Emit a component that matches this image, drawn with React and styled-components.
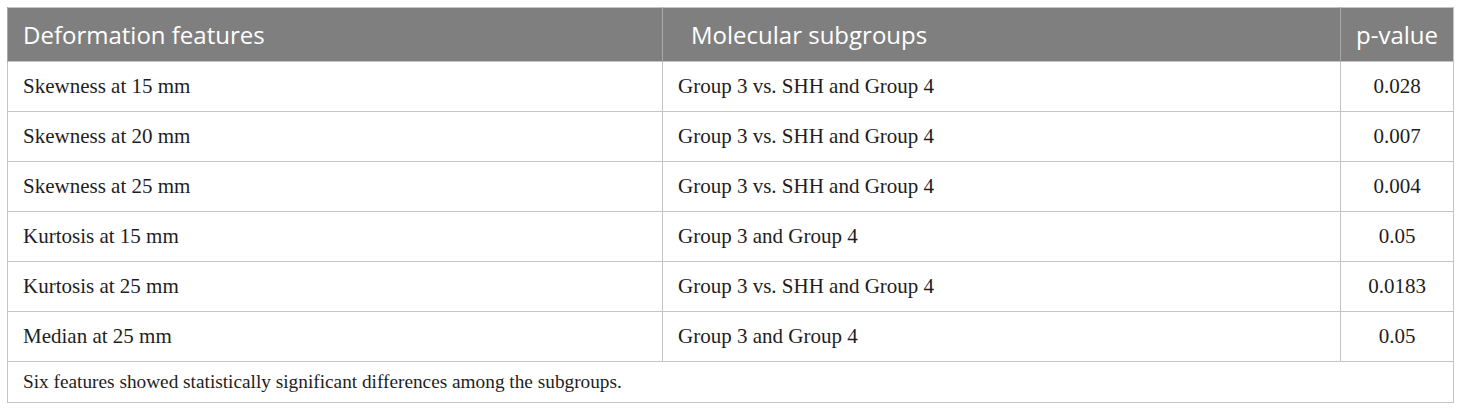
import React from 'react';
import styled, { createGlobalStyle } from 'styled-components';

const GlobalStyle = createGlobalStyle`
  html, body {
    margin: 0;
    padding: 0;
    background: #ffffff;
  }
`;

const Page = styled.div`
  width: 1460px;
  height: 410px;
  padding: 7px 8px 0 7px;
  box-sizing: border-box;
`;

const Table = styled.table`
  width: 1446px;
  border-collapse: collapse;
  table-layout: fixed;
  border: 1px solid #c4c4c4;
`;

const HeadCell = styled.th`
  background: #7f7f7f;
  color: #ffffff;
  font-family: 'Open Sans', sans-serif;
  font-weight: 400;
  font-size: 24px;
  height: 53px;
  padding: 0 15px 0 ${props => props.indent || 15}px;
  text-align: ${props => (props.center ? 'center' : 'left')};
  border-left: 1px solid #a8a8a8;
  vertical-align: middle;
  white-space: nowrap;
`;

const Cell = styled.td`
  font-family: 'Liberation Serif', serif;
  font-size: 21px;
  color: #1e1e1e;
  height: 49px;
  padding: 0 15px;
  text-align: ${props => (props.center ? 'center' : 'left')};
  border: 1px solid #c4c4c4;
  vertical-align: middle;
`;

const NoteCell = styled.td`
  font-family: 'Liberation Serif', serif;
  font-size: 19.3px;
  color: #1e1e1e;
  height: 40px;
  padding: 0 15px;
  border: 1px solid #c4c4c4;
  vertical-align: middle;
`;

const rows = [
  ['Skewness at 15 mm', 'Group 3 vs. SHH and Group 4', '0.028'],
  ['Skewness at 20 mm', 'Group 3 vs. SHH and Group 4', '0.007'],
  ['Skewness at 25 mm', 'Group 3 vs. SHH and Group 4', '0.004'],
  ['Kurtosis at 15 mm', 'Group 3 and Group 4', '0.05'],
  ['Kurtosis at 25 mm', 'Group 3 vs. SHH and Group 4', '0.0183'],
  ['Median at 25 mm', 'Group 3 and Group 4', '0.05'],
];

const App = () => {
  return (
    <>
      <GlobalStyle />
      <Page>
        <Table>
          <colgroup>
            <col style={{ width: 655 }} />
            <col style={{ width: 678 }} />
            <col style={{ width: 113 }} />
          </colgroup>
          <thead>
            <tr>
              <HeadCell>Deformation features</HeadCell>
              <HeadCell indent={28}>Molecular subgroups</HeadCell>
              <HeadCell center>p-value</HeadCell>
            </tr>
          </thead>
          <tbody>
            {rows.map(([feature, group, p]) => (
              <tr key={feature}>
                <Cell>{feature}</Cell>
                <Cell>{group}</Cell>
                <Cell center>{p}</Cell>
              </tr>
            ))}
            <tr>
              <NoteCell colSpan={3}>
                Six features showed statistically significant differences among the subgroups.
              </NoteCell>
            </tr>
          </tbody>
        </Table>
      </Page>
    </>
  );
};

export default App;
